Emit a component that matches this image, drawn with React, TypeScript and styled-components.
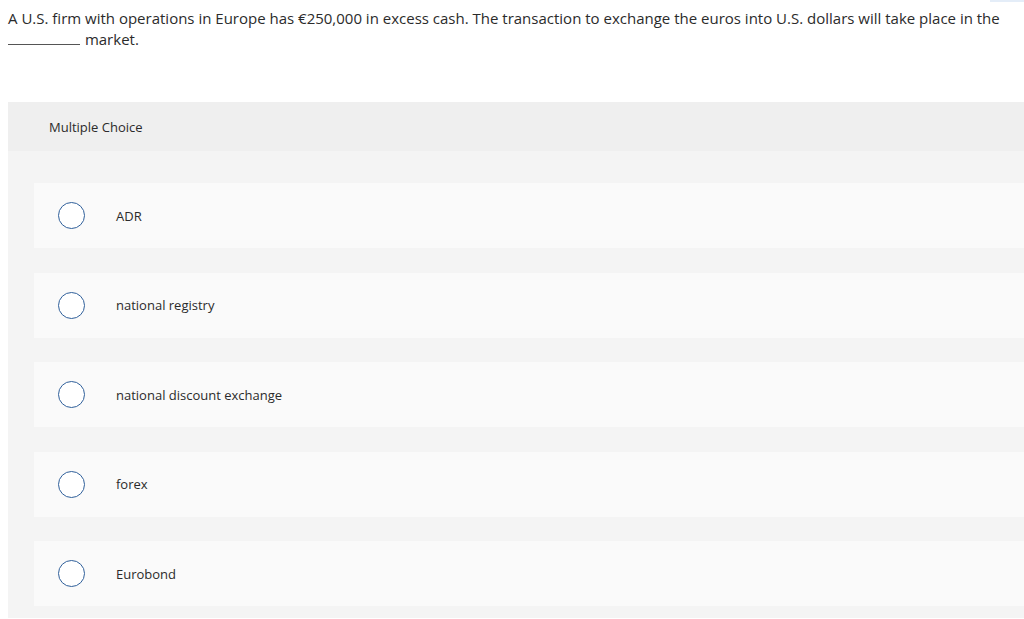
import React from 'react'
import styled, { createGlobalStyle } from 'styled-components'

const GlobalStyle = createGlobalStyle`
  html, body {
    margin: 0;
    padding: 0;
    background: #ffffff;
  }
  body {
    font-family: "Open Sans", Arial, sans-serif;
    color: #2b2b2b;
  }
`

const choices = ['ADR', 'national registry', 'national discount exchange', 'forex', 'Eurobond']

const App = () => {
  return (
    <Page>
      <GlobalStyle />
      <TopTab />
      <Question>
        A U.S. firm with operations in Europe has €250,000 in excess cash. The transaction to exchange the euros into U.S. dollars will take place in the
        <br />
        <Blank /> market.
      </Question>
      <Panel>
        <PanelHeader>Multiple Choice</PanelHeader>
        <ChoiceList>
          {choices.map(choice => (
            <Choice key={choice}>
              <Radio />
              <ChoiceLabel>{choice}</ChoiceLabel>
            </Choice>
          ))}
        </ChoiceList>
      </Panel>
    </Page>
  )
}

const Page = styled.div`
  position: relative;
  padding-left: 8px;
  min-height: 619px;
  box-sizing: border-box;
`

const TopTab = styled.div`
  position: absolute;
  top: 0;
  right: 0;
  width: 34px;
  height: 2px;
  background: #e4edf8;
`

const Question = styled.p`
  margin: 0;
  padding-top: 8px;
  font-size: 15px;
  line-height: 21px;
  color: #2b2b2b;
`

const Blank = styled.span`
  display: inline-block;
  width: 72px;
  border-bottom: 1px solid #555;
  vertical-align: baseline;
  margin-right: 1px;
`

const Panel = styled.div`
  margin-top: 52px;
  background: #f4f4f4;
  padding-bottom: 12px;
`

const PanelHeader = styled.div`
  height: 49px;
  display: flex;
  align-items: center;
  padding-left: 41px;
  background: #efefef;
  font-size: 13px;
  color: #2b2b2b;
`

const ChoiceList = styled.div`
  display: flex;
  flex-direction: column;
  gap: 24.5px;
  padding: 32px 0 0 26px;
`

const Choice = styled.div`
  height: 65px;
  display: flex;
  align-items: center;
  padding-left: 24px;
  background: #fafafa;
`

const Radio = styled.span`
  width: 27px;
  height: 27px;
  box-sizing: border-box;
  border: 1.5px solid #2f5f9a;
  border-radius: 50%;
  background: #ffffff;
  flex-shrink: 0;
`

const ChoiceLabel = styled.span`
  margin-left: 31px;
  font-size: 13px;
  color: #2b2b2b;
`

export default App
